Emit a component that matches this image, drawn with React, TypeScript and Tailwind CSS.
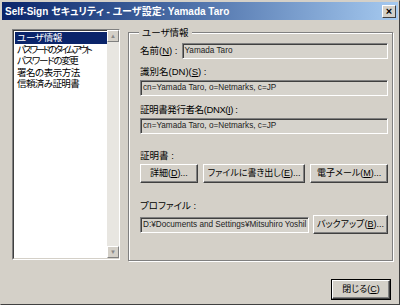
import React from "react";

const items = [
  { t: "ユーザ情報", c: "tracking-[-0.3px]" },
  { t: "パスワードのタイムアウト", c: "tracking-[-2.4px]" },
  { t: "パスワードの変更", c: "tracking-[-1.3px]" },
  { t: "署名の表示方法", c: "tracking-[-0.5px]" },
  { t: "信頼済み証明書", c: "tracking-[-0.6px]" },
];

function Field({ value, className = "" }: { value: string; className?: string }) {
  return (
    <div
      className={`h-[16px] bg-[#d6d3cc] border-t border-l border-[#808080] border-b border-r border-b-white border-r-white shadow-[inset_1px_1px_0_#404040] pl-[2px] text-[8.2px] leading-[14px] text-[#222] whitespace-nowrap overflow-hidden ${className}`}
    >
      {value}
    </div>
  );
}

function Btn({ label, className = "" }: { label: React.ReactNode; className?: string }) {
  return (
    <button
      className={`h-[19px] bg-[#d4d0c8] border border-t-white border-l-white border-b-[#404040] border-r-[#404040] shadow-[inset_-1px_-1px_0_#808080] text-[9px] leading-none whitespace-nowrap text-black flex items-center justify-center ${className}`}
    >
      {label}
    </button>
  );
}

export default function App() {
  return (
    <div
      className={
        'w-[400px] h-[305px] bg-[#d4d0c8] border border-t-[#d4d0c8] border-l-[#d4d0c8] border-r-[#404040] border-b-[#404040] flex flex-col overflow-hidden select-none font-["Liberation_Sans","Noto_Sans_CJK_JP",sans-serif] [font-feature-settings:"palt"] text-[9px]'
      }
    >
      {/* Title bar */}
      <div className="h-[18px] mx-[1px] mt-[1px] bg-gradient-to-r from-[#0a246a] to-[#a6caf0] flex items-center justify-between pl-[3px] pr-[2px]">
        <span className="text-white text-[10px] font-bold">Self-Sign セキュリティ - ユーザ設定: Yamada Taro</span>
        <span className="w-[14px] h-[13px] bg-[#d4d0c8] border border-t-white border-l-white border-b-[#404040] border-r-[#404040] flex items-center justify-center text-[11px] font-bold leading-none text-black">
          ×
        </span>
      </div>

      <div className="flex pl-[11px] pr-[6px] pt-[9px] gap-[8px]">
        {/* Left list */}
        <div className="w-[109px] h-[231px] flex border border-t-[#808080] border-l-[#808080] border-b-white border-r-white">
          <div className="flex-1 overflow-hidden bg-white border border-t-[#404040] border-l-[#404040] border-b-[#d4d0c8] border-r-0 pt-[1px] pl-[1px]">
            {items.map((it, i) => (
              <div
                key={it.t}
                className={`h-[11.5px] text-[9.5px] leading-[11.5px] pl-[2px] whitespace-nowrap ${it.c} ${
                  i === 0 ? "bg-[#0a246a] text-white" : "text-black"
                }`}
              >
                {it.t}
              </div>
            ))}
          </div>
          <div className="w-[12px] bg-[#e8e6e1] flex flex-col justify-between border-b border-[#d4d0c8]">
            <div className="h-[12px] bg-[#d4d0c8] border border-t-white border-l-white border-b-[#808080] border-r-[#808080] flex items-center justify-center text-[6px] text-[#888]">▲</div>
            <div className="h-[12px] bg-[#d4d0c8] border border-t-white border-l-white border-b-[#808080] border-r-[#808080] flex items-center justify-center text-[6px] text-[#888]">▼</div>
          </div>
        </div>

        {/* Group box */}
        <div className="relative mt-[3px] w-[265px] h-[229px] border border-[#808080] shadow-[inset_1px_1px_0_#fff,1px_1px_0_#fff] pl-[11px] pr-[4px] pt-[10px]">
          <span className="absolute -top-[7px] left-[10px] bg-[#d4d0c8] px-[3px] text-[9.5px] leading-[13px]">ユーザ情報</span>

          <div className="flex items-center gap-[4px]">
            <span className="text-[9.5px] whitespace-nowrap">
              名前(<u>N</u>) :
            </span>
            <Field value="Yamada Taro" className="flex-1" />
          </div>

          <div className="mt-[6px] text-[9.5px] leading-[14px]">
            識別名(DN)(<u>S</u>) :
          </div>
          <Field value="cn=Yamada Taro, o=Netmarks, c=JP" className="mt-[1px]" />

          <div className="mt-[7px] text-[9.5px] leading-[14px] tracking-[-0.4px]">
            証明書発行者名(DNX(<u>I</u>) :
          </div>
          <Field value="cn=Yamada Taro, o=Netmarks, c=JP" className="mt-[1px]" />

          <div className="mt-[15px] text-[9.5px] leading-[14px]">証明書 :</div>
          <div className="mt-[1px] flex gap-[5px]">
            <Btn className="w-[58px]" label={<>詳細(<u>D</u>)...</>} />
            <Btn className="w-[103px]" label={<>ファイルに書き出し(<u>E</u>)...</>} />
            <Btn className="w-[78px]" label={<>電子メール(<u>M</u>)...</>} />
          </div>

          <div className="mt-[16px] text-[9.5px] leading-[14px]">プロファイル :</div>
          <div className="mt-[2px] flex items-center gap-[4px]">
            <Field value="D:¥Documents and Settings¥Mitsuhiro Yoshil" className="w-[171px]" />
            <Btn className="w-[76px]" label={<>バックアップ(<u>B</u>)...</>} />
          </div>
        </div>
      </div>

      <div className="flex justify-end pr-[9px] mt-[19px]">
        <Btn className="w-[58px] h-[18px] outline outline-1 outline-black" label={<>閉じる(<u>C</u>)</>} />
      </div>
    </div>
  );
}
